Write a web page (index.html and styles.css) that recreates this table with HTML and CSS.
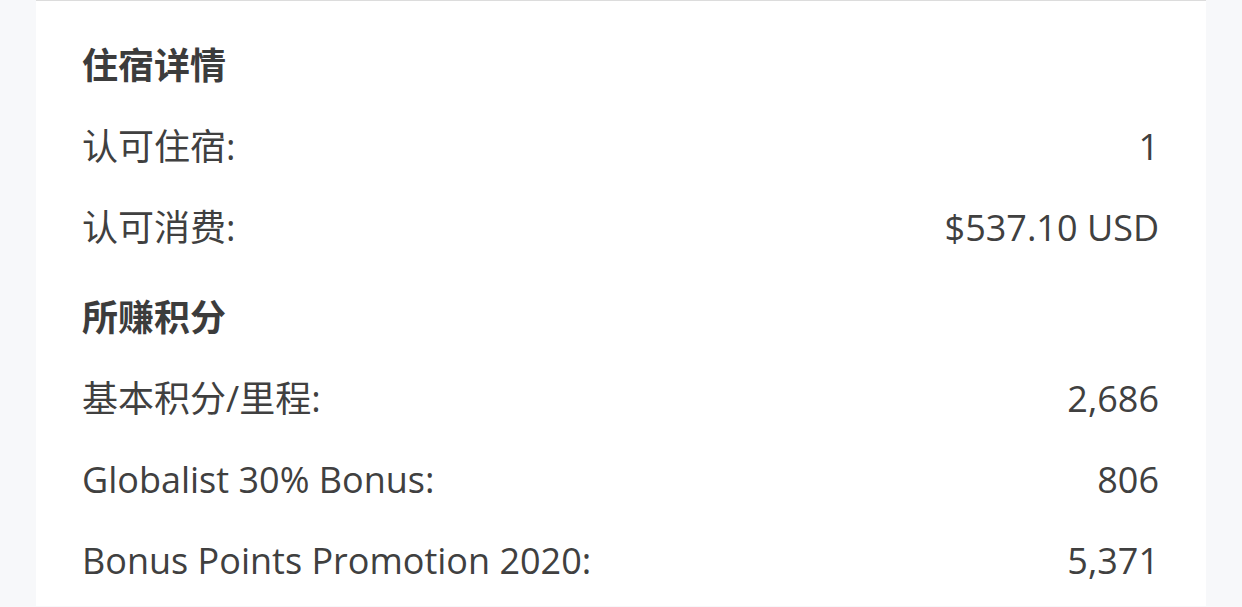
FILE: index.html
```html
<!DOCTYPE html>
<html lang="zh-CN">
<head>
<meta charset="utf-8">
<title>住宿详情</title>
<link rel="stylesheet" href="styles.css">
</head>
<body>
<div class="card">
  <section class="group">
    <h2 class="group-title">住宿详情</h2>
    <div class="row"><span class="label">认可住宿:</span><span class="value">1</span></div>
    <div class="row"><span class="label">认可消费:</span><span class="value">$537.10 USD</span></div>
  </section>
  <section class="group group-second">
    <h2 class="group-title">所赚积分</h2>
    <div class="row"><span class="label">基本积分/里程:</span><span class="value">2,686</span></div>
    <div class="row"><span class="label">Globalist 30% Bonus:</span><span class="value">806</span></div>
    <div class="row"><span class="label">Bonus Points Promotion 2020:</span><span class="value">5,371</span></div>
  </section>
</div>
</body>
</html>
```

FILE: styles.css
```css
html, body {
  margin: 0;
  padding: 0;
  background: #f7f8fa;
}
body {
  font-family: "Open Sans", "Noto Sans CJK SC", sans-serif;
  color: #404040;
  font-size: 36px;
}
.card {
  margin: 0 36px;
  background: #ffffff;
  border-top: 1px solid #dcdcdc;
  padding: 24px 47px 0 46px;
  min-height: 606px;
  box-sizing: border-box;
}
.group-title {
  margin: 0;
  font-size: 36px;
  font-weight: 700;
  color: #3c3c3c;
  line-height: 81px;
  height: 81px;
}
.group-second {
  margin-top: 9px;
}
.row {
  display: flex;
  justify-content: space-between;
  align-items: center;
  height: 81px;
  line-height: 81px;
}
.label, .value {
  white-space: nowrap;
}
```
